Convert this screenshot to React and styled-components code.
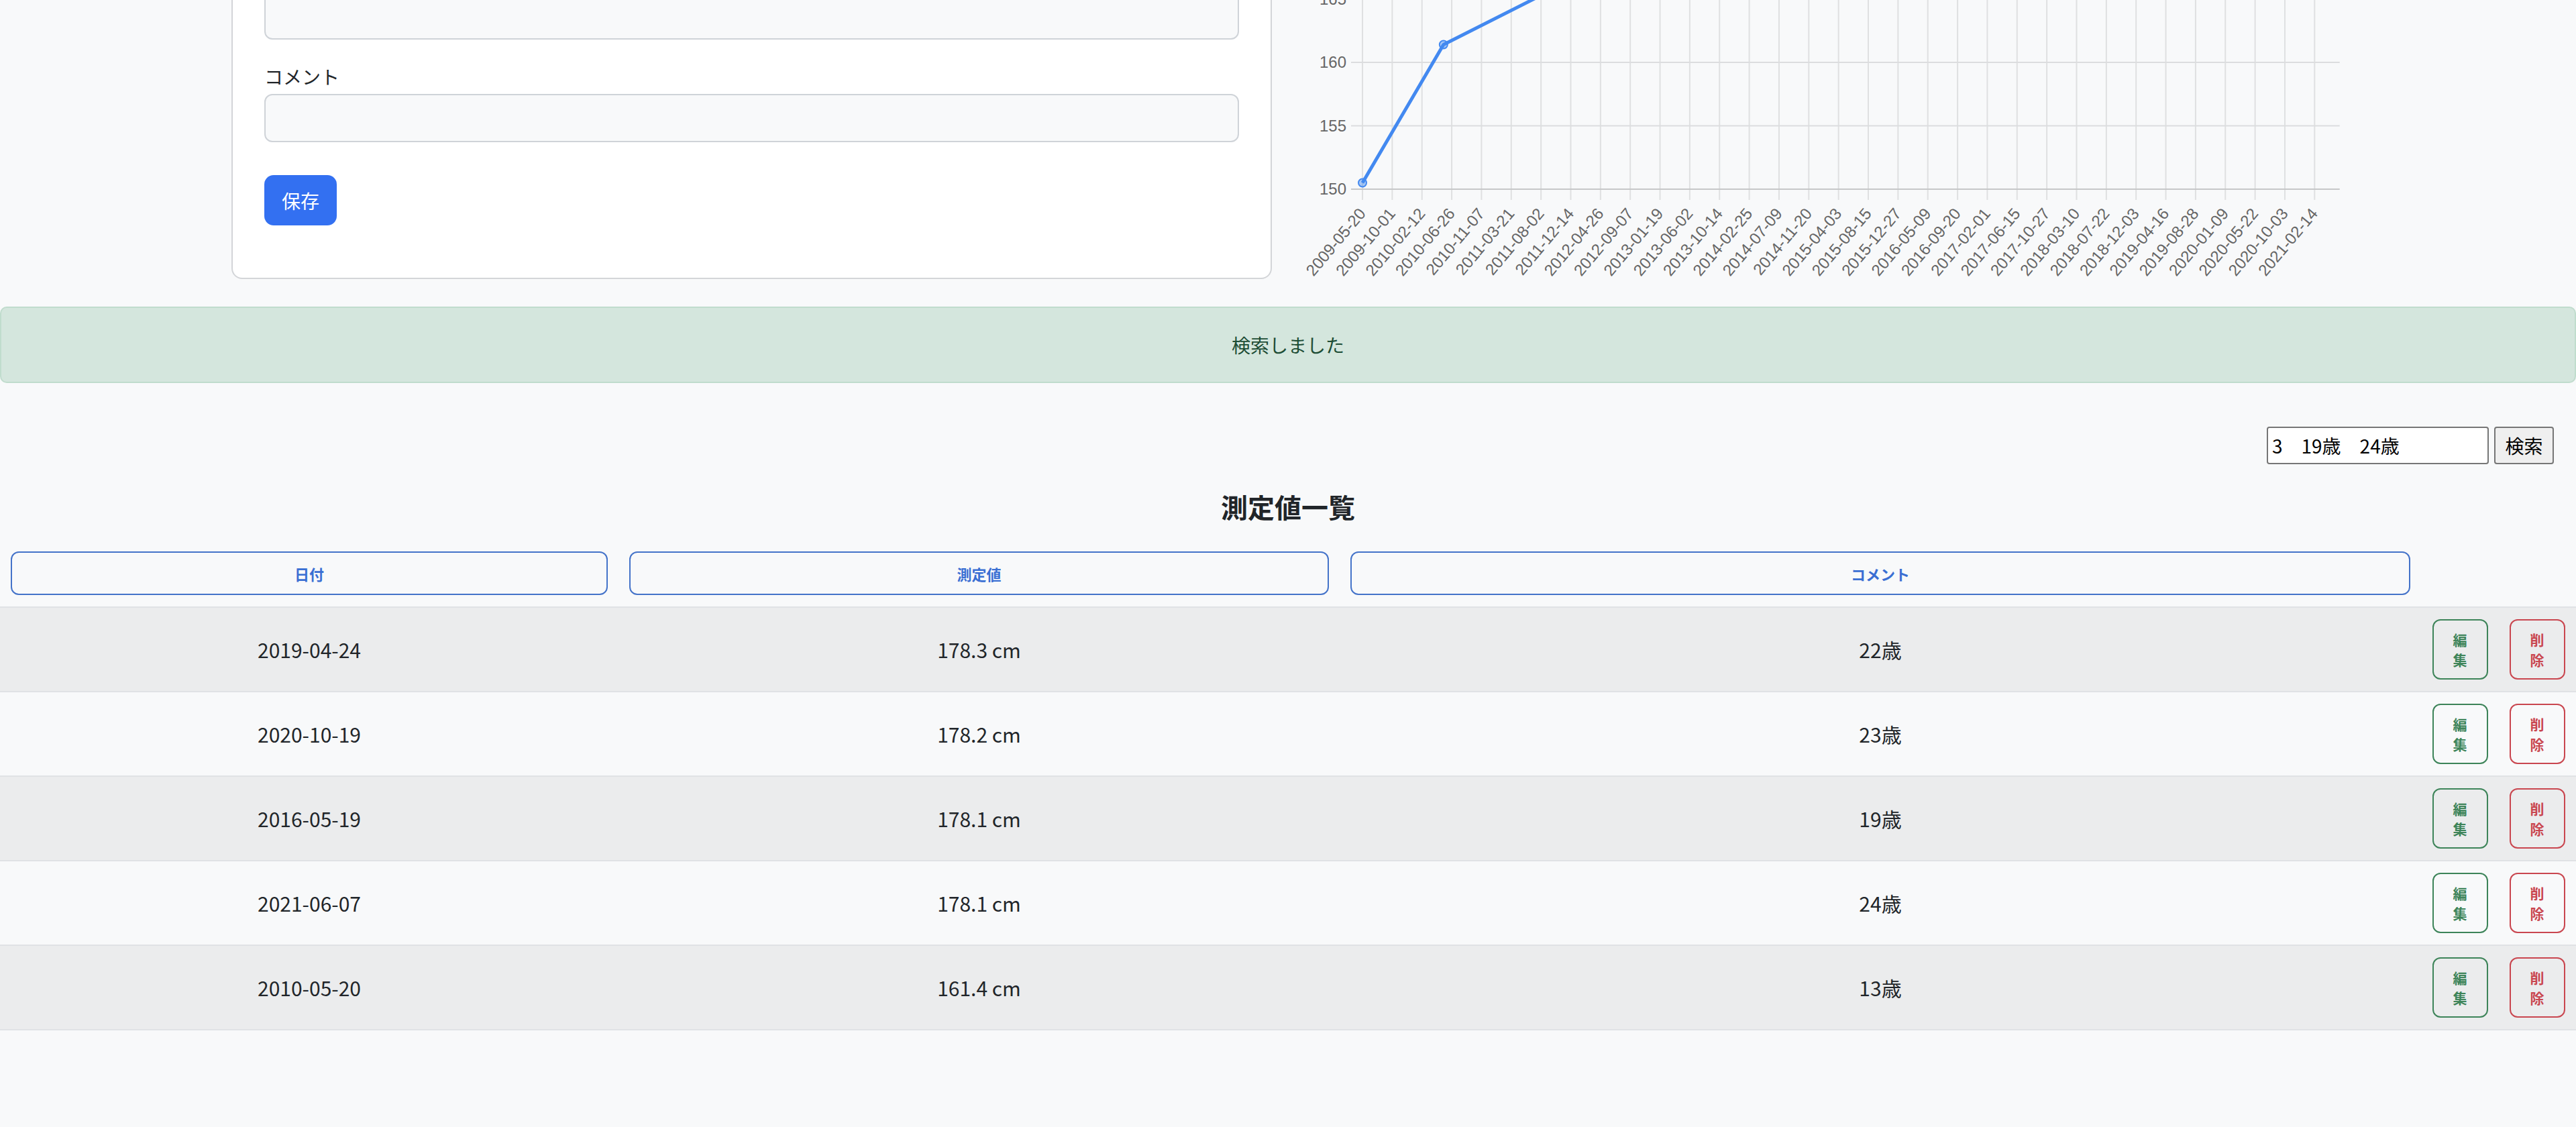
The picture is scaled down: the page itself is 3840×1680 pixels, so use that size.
import styled, { createGlobalStyle } from 'styled-components'

const GlobalStyle = createGlobalStyle`
    html, body {
        margin: 0;
        background: #f8f9fa;
    }
    body {
        font-family: "Noto Sans CJK JP", "Noto Sans", sans-serif;
        color: #212529;
    }
    * {
        box-sizing: border-box;
    }
`

const TopSection = styled.section`
    width: 3150px;
    margin: -263px auto 0;
    display: grid;
    grid-template-columns: 1551px 1567px;
    column-gap: 32px;
    align-items: start;
`

const FormCard = styled.div`
    background: #ffffff;
    border: 2px solid #d3d5d8;
    border-radius: 16px;
    padding: 48px 47px 78px;
`

const Field = styled.div`
    margin-bottom: 34px;
`

const FieldLabel = styled.label`
    display: block;
    font-size: 28px;
    line-height: 42px;
    margin-bottom: 5px;
    color: #212529;
`

const FieldInput = styled.input`
    display: block;
    width: 100%;
    height: 72px;
    border: 2px solid #cfd3d8;
    border-radius: 12px;
    background: #f8f9fa;
    font-size: 28px;
    padding: 0 20px;
    font-family: inherit;
`

const SaveButton = styled.button`
    display: block;
    margin-top: 49px;
    height: 75px;
    padding: 0 26px;
    border: none;
    border-radius: 14px;
    background: #3370f1;
    color: #ffffff;
    font-family: inherit;
    font-size: 28px;
    line-height: 42px;
`

const ChartBox = styled.div`
    svg {
        display: block;
        overflow: visible;
    }
`

const Alert = styled.div`
    margin-top: 41px;
    height: 114px;
    display: flex;
    align-items: center;
    justify-content: center;
    background: #d4e6dd;
    border: 2px solid #c0dccd;
    border-radius: 10px;
    color: #1d4d35;
    font-size: 28px;
`

const SearchRow = styled.form`
    margin: 65px 0 0;
    padding-right: 33px;
    display: flex;
    justify-content: flex-end;
    gap: 8px;
`

const SearchInput = styled.input`
    width: 331px;
    height: 56px;
    border: 2px solid #767676;
    border-radius: 4px;
    background: #ffffff;
    padding: 0 6px;
    font-family: inherit;
    font-size: 28px;
    color: #000;
`

const SearchButton = styled.button`
    width: 89px;
    height: 56px;
    border: 2px solid #767676;
    border-radius: 4px;
    background: #efefef;
    font-family: inherit;
    font-size: 28px;
    color: #000;
    padding: 0;
`

const Title = styled.h2`
    margin: 33px 0 21px;
    text-align: center;
    font-size: 40px;
    line-height: 60px;
    font-weight: 700;
    color: #212529;
`

const Table = styled.table`
    width: 100%;
    border-collapse: collapse;
    table-layout: fixed;
`

const HeadCell = styled.th`
    padding: 16px 16px 17px;
    border-bottom: 2px solid #e0e2e5;
`

const HeaderButton = styled.button`
    display: block;
    width: 100%;
    height: 65px;
    border: 2px solid #4473c9;
    border-radius: 12px;
    background: transparent;
    color: #3a6fd3;
    font-family: inherit;
    font-size: 22px;
    font-weight: 700;
`

const Row = styled.tr`
    background: ${p => (p.$striped ? '#ebeced' : 'transparent')};
    border-bottom: 2px solid #e0e2e5;
`

const Cell = styled.td`
    padding: 17px 16px;
    text-align: center;
    vertical-align: middle;
    font-size: 30px;
    color: #212529;
`

const Actions = styled.div`
    display: flex;
    justify-content: center;
    gap: 32px;
`

const ActionButton = styled.button`
    width: 83px;
    height: 90px;
    padding: 0 28px;
    border: 2px solid ${p => p.$color};
    border-radius: 12px;
    background: transparent;
    color: ${p => p.$color};
    font-family: inherit;
    font-size: 21px;
    line-height: 30px;
    font-weight: 700;
`

const START = Date.UTC(2009, 4, 20)
const dayOf = (s) => {
    const [y, m, d] = s.split('-').map(Number)
    return (Date.UTC(y, m - 1, d) - START) / 86400000
}

const X0 = 103
const PX_PER_DAY = 0.331
const xOf = (s) => X0 + dayOf(s) * PX_PER_DAY
const yOf = (v) => 545 - (v - 150) * 18.9

const tickLabels = [
    '2009-05-20', '2009-10-01', '2010-02-12', '2010-06-26', '2010-11-07', '2011-03-21',
    '2011-08-02', '2011-12-14', '2012-04-26', '2012-09-07', '2013-01-19', '2013-06-02',
    '2013-10-14', '2014-02-25', '2014-07-09', '2014-11-20', '2015-04-03', '2015-08-15',
    '2015-12-27', '2016-05-09', '2016-09-20', '2017-02-01', '2017-06-15', '2017-10-27',
    '2018-03-10', '2018-07-22', '2018-12-03', '2019-04-16', '2019-08-28', '2020-01-09',
    '2020-05-22', '2020-10-03', '2021-02-14',
]

const points = [
    ['2009-05-20', 150.5],
    ['2010-05-20', 161.4],
    ['2013-05-20', 171.1],
    ['2016-05-19', 178.1],
    ['2019-04-24', 178.3],
    ['2020-10-19', 178.2],
    ['2021-06-07', 178.1],
]

const yTicks = [150, 155, 160, 165, 170, 175, 180]

function HeightChart () {
    const right = xOf('2021-06-07')
    const line = points.map(([d, v]) => `${xOf(d)},${yOf(v)}`).join(' ')
    return (
        <svg width='1567' height='679' viewBox='0 0 1567 679'>
            {tickLabels.map(label => {
                const x = xOf(label)
                return <line key={label} x1={x} x2={x} y1={yOf(180)} y2={yOf(150) + 16} stroke='#dfe0e1' strokeWidth='2' />
            })}
            {yTicks.map(v => (
                <g key={v}>
                    <line x1='86' x2={right} y1={yOf(v)} y2={yOf(v)} stroke={v === 150 ? '#c6c7c8' : '#dcdddf'} strokeWidth='2' />
                    <text x='79' y={yOf(v) + 8} textAnchor='end' fontSize='24' fill='#666' fontFamily='"Liberation Sans", Arial, sans-serif'>{v}</text>
                </g>
            ))}
            {tickLabels.map(label => (
                <text
                    key={'l' + label}
                    transform={`translate(${xOf(label) + 6}, 582) rotate(-50)`}
                    textAnchor='end'
                    fontSize='24'
                    fill='#666'
                    fontFamily='"Liberation Sans", Arial, sans-serif'
                >
                    {label}
                </text>
            ))}
            <polyline points={line} fill='none' stroke='#4389f0' strokeWidth='5' strokeLinejoin='round' />
            {points.map(([d, v]) => (
                <circle key={d} cx={xOf(d)} cy={yOf(v)} r='6' fill='rgba(67,137,240,0.45)' stroke='#4389f0' strokeWidth='2' />
            ))}
        </svg>
    )
}

const records = [
    { date: '2019-04-24', value: '178.3 cm', comment: '22歳' },
    { date: '2020-10-19', value: '178.2 cm', comment: '23歳' },
    { date: '2016-05-19', value: '178.1 cm', comment: '19歳' },
    { date: '2021-06-07', value: '178.1 cm', comment: '24歳' },
    { date: '2010-05-20', value: '161.4 cm', comment: '13歳' },
]

export default function App () {
    return (
        <>
            <GlobalStyle />
            <TopSection>
                <FormCard>
                    <Field>
                        <FieldLabel>日付</FieldLabel>
                        <FieldInput type='text' />
                    </Field>
                    <Field>
                        <FieldLabel>測定値</FieldLabel>
                        <FieldInput type='text' />
                    </Field>
                    <Field>
                        <FieldLabel>コメント</FieldLabel>
                        <FieldInput type='text' />
                    </Field>
                    <SaveButton type='button'>保存</SaveButton>
                </FormCard>
                <ChartBox>
                    <HeightChart />
                </ChartBox>
            </TopSection>

            <Alert>検索しました</Alert>

            <SearchRow onSubmit={e => e.preventDefault()}>
                <SearchInput type='text' defaultValue='3　19歳　24歳' />
                <SearchButton type='submit'>検索</SearchButton>
            </SearchRow>

            <Title>測定値一覧</Title>

            <Table>
                <colgroup>
                    <col style={{ width: '922px' }} />
                    <col style={{ width: '1075px' }} />
                    <col style={{ width: '1612px' }} />
                    <col style={{ width: '231px' }} />
                </colgroup>
                <thead>
                    <tr>
                        <HeadCell><HeaderButton>日付</HeaderButton></HeadCell>
                        <HeadCell><HeaderButton>測定値</HeaderButton></HeadCell>
                        <HeadCell><HeaderButton>コメント</HeaderButton></HeadCell>
                        <HeadCell />
                    </tr>
                </thead>
                <tbody>
                    {records.map((r, i) => (
                        <Row key={r.date} $striped={i % 2 === 0}>
                            <Cell>{r.date}</Cell>
                            <Cell>{r.value}</Cell>
                            <Cell>{r.comment}</Cell>
                            <Cell>
                                <Actions>
                                    <ActionButton $color='#3d8459'>編集</ActionButton>
                                    <ActionButton $color='#c9464f'>削除</ActionButton>
                                </Actions>
                            </Cell>
                        </Row>
                    ))}
                </tbody>
            </Table>
        </>
    )
}
